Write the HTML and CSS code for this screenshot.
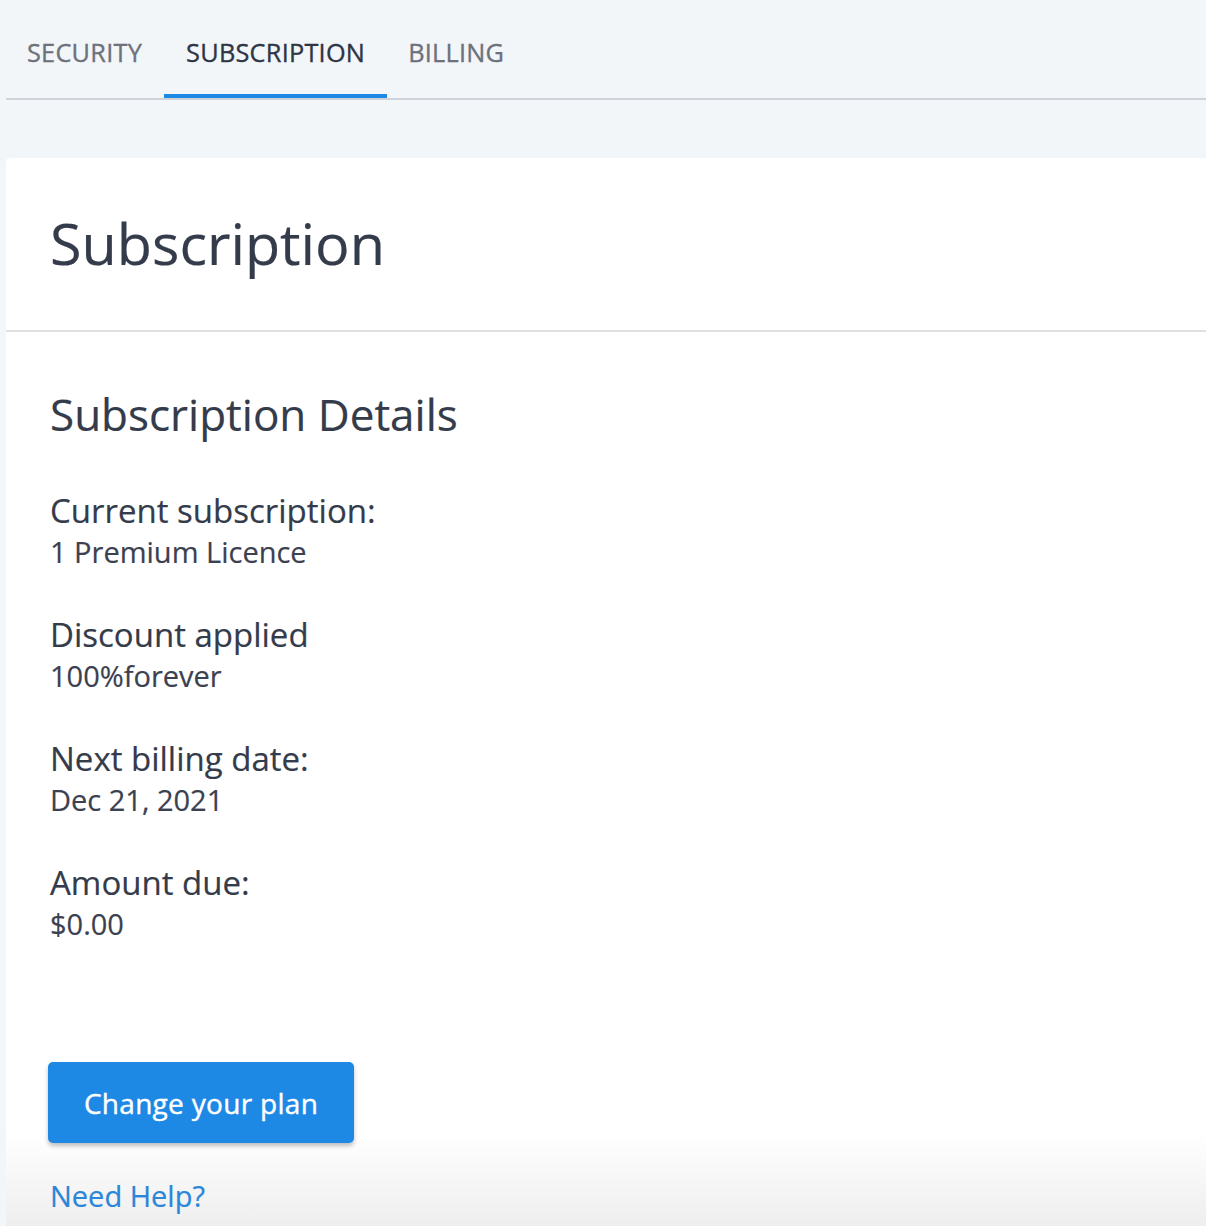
FILE: index.html
```html
<!DOCTYPE html>
<html>
<head>
<meta charset="utf-8">
<link rel="stylesheet" href="styles.css">
</head>
<body>
<div class="page">
  <nav class="tabs">
    <a class="tab">SECURITY</a>
    <a class="tab active">SUBSCRIPTION</a>
    <a class="tab">BILLING</a>
  </nav>
  <section class="card">
    <header class="card-head">
      <h1 class="title">Subscription</h1>
    </header>
    <div class="card-body">
      <h2 class="subtitle">Subscription Details</h2>
      <dl class="details">
        <div class="item"><dt>Current subscription:</dt><dd>1 Premium Licence</dd></div>
        <div class="item"><dt>Discount applied</dt><dd>100%forever</dd></div>
        <div class="item"><dt>Next billing date:</dt><dd>Dec 21, 2021</dd></div>
        <div class="item"><dt>Amount due:</dt><dd>$0.00</dd></div>
      </dl>
      <button class="btn">Change your plan</button>
      <a class="help">Need Help?</a>
    </div>
  </section>
</div>
</body>
</html>
```
FILE: styles.css
```css
html, body {
  margin: 0;
  padding: 0;
  background: #f2f6f9;
  font-family: "Open Sans", "Noto Sans", sans-serif;
  overflow: hidden;
  -webkit-text-stroke: 0.2px currentColor;
}
.page {
  padding-left: 6px;
  height: 1226px;
  box-sizing: border-box;
  display: flex;
  flex-direction: column;
  overflow: hidden;
}
.tabs {
  display: flex;
  flex: none;
  border-bottom: 2px solid #d0d4da;
  height: 98px;
}
.tab {
  display: flex;
  align-items: center;
  padding: 9px 22px 0 21px;
  height: 98px;
  box-sizing: border-box;
  font-size: 25.3px;
  color: #6d717c;
  letter-spacing: 0.25px;
  border-bottom: 4px solid transparent;
  -webkit-text-stroke: 0.35px currentColor;
}
.tab.active {
  color: #2e3545;
  border-bottom-color: #1e88e5;
  padding-left: 22px;
}
.card {
  flex: 1;
  margin-top: 58px;
  background: linear-gradient(to bottom, #ffffff calc(100% - 92px), #eeeeee 100%);
  border-top-left-radius: 4px;
}
.card-head {
  height: 174px;
  box-sizing: border-box;
  border-bottom: 2px solid #e0e0e0;
  padding: 0 44px;
  display: flex;
  align-items: center;
}
.title {
  margin: 0;
  font-weight: 400;
  font-size: 57.5px;
  color: #343b4a;
  line-height: 1;
}
.card-body {
  padding: 52px 44px 0;
}
.subtitle {
  margin: 0;
  font-weight: 400;
  font-size: 44px;
  color: #343b4a;
  line-height: 60px;
}
.details {
  margin: 46px 0 0;
}
.item {
  margin-bottom: 42px;
}
.item dt {
  font-size: 33px;
  color: #343b4a;
  line-height: 42px;
}
.item dd {
  margin: 0;
  font-size: 29px;
  color: #3b4150;
  line-height: 40px;
}
.btn {
  display: block;
  margin: 118px 0 0 -2px;
  width: 306px;
  height: 81px;
  background: #1e88e5;
  color: #fff;
  border: 0;
  border-radius: 5px;
  box-shadow: 0 3px 4px rgba(0,0,0,0.25);
  font-family: "Open Sans", "Noto Sans", sans-serif;
  font-size: 28px;
  letter-spacing: 0.3px;
  padding: 0;
  -webkit-text-stroke: 0.4px #fff;
}
.help {
  display: block;
  margin-top: 33px;
  font-size: 29px;
  color: #2a86d8;
}
```
